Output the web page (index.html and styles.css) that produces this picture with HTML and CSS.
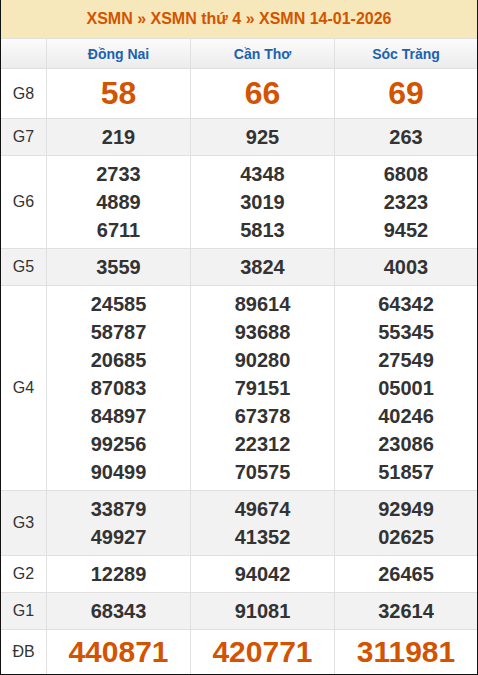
FILE: index.html
```html
<!DOCTYPE html>
<html lang="vi">
<head>
<meta charset="utf-8">
<title>XSMN 14-01-2026</title>
<link rel="stylesheet" href="styles.css">
</head>
<body>
<div class="board">
  <div class="title">XSMN » XSMN thứ 4 » XSMN 14-01-2026</div>

  <div class="head corner"></div>
  <div class="head">Đồng Nai</div>
  <div class="head">Cần Thơ</div>
  <div class="head">Sóc Trăng</div>

  <div class="lbl">G8</div>
  <div class="cell g8"><div>58</div></div>
  <div class="cell g8"><div>66</div></div>
  <div class="cell g8"><div>69</div></div>

  <div class="lbl alt">G7</div>
  <div class="cell alt"><div>219</div></div>
  <div class="cell alt"><div>925</div></div>
  <div class="cell alt"><div>263</div></div>

  <div class="lbl">G6</div>
  <div class="cell"><div>2733</div><div>4889</div><div>6711</div></div>
  <div class="cell"><div>4348</div><div>3019</div><div>5813</div></div>
  <div class="cell"><div>6808</div><div>2323</div><div>9452</div></div>

  <div class="lbl alt">G5</div>
  <div class="cell alt"><div>3559</div></div>
  <div class="cell alt"><div>3824</div></div>
  <div class="cell alt"><div>4003</div></div>

  <div class="lbl">G4</div>
  <div class="cell"><div>24585</div><div>58787</div><div>20685</div><div>87083</div><div>84897</div><div>99256</div><div>90499</div></div>
  <div class="cell"><div>89614</div><div>93688</div><div>90280</div><div>79151</div><div>67378</div><div>22312</div><div>70575</div></div>
  <div class="cell"><div>64342</div><div>55345</div><div>27549</div><div>05001</div><div>40246</div><div>23086</div><div>51857</div></div>

  <div class="lbl alt">G3</div>
  <div class="cell alt"><div>33879</div><div>49927</div></div>
  <div class="cell alt"><div>49674</div><div>41352</div></div>
  <div class="cell alt"><div>92949</div><div>02625</div></div>

  <div class="lbl">G2</div>
  <div class="cell"><div>12289</div></div>
  <div class="cell"><div>94042</div></div>
  <div class="cell"><div>26465</div></div>

  <div class="lbl alt">G1</div>
  <div class="cell alt"><div>68343</div></div>
  <div class="cell alt"><div>91081</div></div>
  <div class="cell alt"><div>32614</div></div>

  <div class="lbl">ĐB</div>
  <div class="cell db"><div>440871</div></div>
  <div class="cell db"><div>420771</div></div>
  <div class="cell db"><div>311981</div></div>
</div>
</body>
</html>
```
FILE: styles.css
```css
html, body {
  margin: 0;
  padding: 0;
  background: #fff;
}

body {
  font-family: "Liberation Sans", Arial, sans-serif;
  color: #333;
}

.board {
  width: 476px;
  border: 1px solid #111;
  border-top: none;
  background: #e0e0e0;
  display: grid;
  grid-template-columns: 45px 143px 143px 142px;
  gap: 1px;
}

.title {
  grid-column: 1 / -1;
  height: 38px;
  background: #f6e8bb;
  color: #d35400;
  font-size: 16px;
  font-weight: bold;
  display: flex;
  align-items: center;
  justify-content: center;
}

.head {
  height: 29px;
  background: linear-gradient(#fbfbfb, #ececec);
  color: #1b62b0;
  font-size: 14px;
  font-weight: bold;
  display: flex;
  align-items: center;
  justify-content: center;
}

.lbl {
  background: #fff;
  font-size: 16px;
  color: #333;
  display: flex;
  align-items: center;
  justify-content: center;
}

.cell {
  background: #fff;
  padding: 4px 0;
  font-size: 20px;
  font-weight: bold;
  line-height: 28px;
  color: #333;
  display: flex;
  flex-direction: column;
  align-items: center;
  justify-content: center;
}

.alt {
  background: #f2f2f2;
}

.cell.g8 {
  font-size: 32px;
  line-height: 41px;
  color: #d35400;
}

.cell.db {
  font-size: 30px;
  line-height: 36px;
  color: #d35400;
}
```
